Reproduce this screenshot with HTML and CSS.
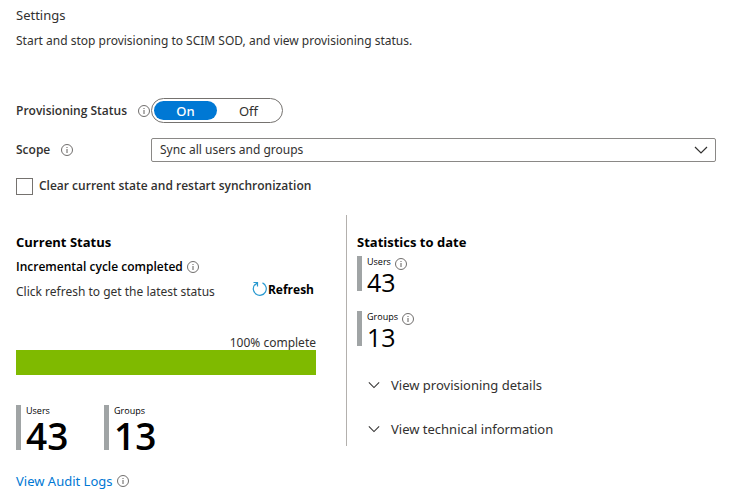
FILE: index.html
```html
<!DOCTYPE html>
<html lang="en">
<head>
<meta charset="utf-8">
<title>Provisioning settings</title>
<link rel="stylesheet" href="styles.css">
</head>
<body>
<svg class="defs" aria-hidden="true">
  <symbol id="info" viewBox="0 0 12 12"><circle cx="6" cy="6" r="5.5" fill="none" stroke="currentColor" stroke-width=".9"/><path d="M6 5v4M6 3v1" fill="none" stroke="currentColor"/></symbol>
  <symbol id="chevron" viewBox="0 0 14 8"><path d="M1 1l6 6 6-6" fill="none" stroke="currentColor" stroke-width="1.2"/></symbol>
</svg>
<main>
  <h1>Settings</h1>
  <p class="intro">Start and stop provisioning to SCIM SOD, and view provisioning status.</p>

  <form class="form">
    <div class="field" role="radiogroup" aria-labelledby="status-label">
      <span class="label label-wide"><span id="status-label">Provisioning Status</span><svg class="info"><use href="#info"/></svg></span>
      <div class="toggle">
        <label><input type="radio" name="status" checked><span>On</span></label>
        <label><input type="radio" name="status"><span>Off</span></label>
      </div>
    </div>
    <div class="field">
      <span class="label"><label for="scope">Scope</label><svg class="info"><use href="#info"/></svg></span>
      <div class="select">
        <select id="scope"><option>Sync all users and groups</option></select>
        <svg class="arrow"><use href="#chevron"/></svg>
      </div>
    </div>
    <label class="check"><input type="checkbox"><span>Clear current state and restart synchronization</span></label>
  </form>

  <div class="columns">
    <section class="current">
      <h2>Current Status</h2>
      <h3>Incremental cycle completed<svg class="info"><use href="#info"/></svg></h3>
      <div class="refresh-row">
        <span>Click refresh to get the latest status</span>
        <button type="button" class="refresh"><svg viewBox="0 0 16 16"><path d="M10.5 .9A6.5 6.5 0 1 1 3 2.4M1.5 .5H5.5V4.5M5.5 .5L3 3" fill="none" stroke="currentColor" stroke-width="1.2"/></svg>Refresh</button>
      </div>
      <p class="percent">100% complete</p>
      <div class="progress" role="progressbar" aria-label="Cycle progress" aria-valuenow="100" aria-valuemin="0" aria-valuemax="100"></div>
      <div class="stats">
        <div class="stat large"><div class="stat-name">Users</div><div class="stat-value">43</div></div>
        <div class="stat large"><div class="stat-name">Groups</div><div class="stat-value">13</div></div>
      </div>
    </section>
    <section class="totals">
      <h2>Statistics to date</h2>
      <div class="stat"><div class="stat-name">Users<svg class="info"><use href="#info"/></svg></div><div class="stat-value">43</div></div>
      <div class="stat"><div class="stat-name">Groups<svg class="info"><use href="#info"/></svg></div><div class="stat-value">13</div></div>
      <button type="button" class="expander"><svg><use href="#chevron"/></svg>View provisioning details</button>
      <button type="button" class="expander"><svg><use href="#chevron"/></svg>View technical information</button>
    </section>
  </div>
  <p class="logs"><a href="#logs">View Audit Logs</a><svg class="info"><use href="#info"/></svg></p>
</main>
</body>
</html>
```
FILE: styles.css
```css
* { box-sizing: border-box; }
body {
  margin: 0;
  background: #fff;
  color: #323130;
  font: 12px/20px "Noto Sans", "Open Sans", sans-serif;
}
main { padding: 5px 14px 8px 16px; }
h1, h2, h3, p { margin: 0; font-size: inherit; }
h1 { font-size: 13px; font-weight: 400; }
button, select { font: inherit; color: inherit; }
.defs { position: absolute; width: 0; height: 0; }
.info { width: 12px; height: 12px; flex: none; color: #605e5c; }
.intro { margin-top: 6px; }

.form { margin-top: 47px; }
.field { display: flex; align-items: center; }
.field + .field { margin-top: 15px; }
.label, .check, h2, h3, .refresh, .stat { font-family: "Open Sans", "Noto Sans", sans-serif; }
.label { display: flex; align-items: center; gap: 11px; width: 135px; flex: none; font-weight: 600; }
.label-wide { justify-content: space-between; gap: 0; padding-right: 1px; }
.toggle {
  display: flex;
  width: 132px;
  height: 25px;
  padding: 2px;
  border: 1px solid #75726f;
  border-radius: 13px;
}
.toggle label { flex: 1; position: relative; text-align: center; font-size: 13px; }
.toggle input { position: absolute; opacity: 0; margin: 0; }
.toggle span { display: block; height: 19px; border-radius: 10px; }
.toggle input:checked + span { background: #0078d4; color: #fff; font-weight: 500; }
.select { position: relative; flex: 1; }
select {
  display: block;
  appearance: none;
  width: 100%;
  height: 24px;
  padding: 0 30px 0 8px;
  border: 1px solid #8a8886;
  border-radius: 2px;
  background: #fff;
}
.arrow { position: absolute; right: 8px; top: 8px; width: 14px; height: 8px; pointer-events: none; }
.check { display: flex; align-items: center; gap: 6px; margin-top: 14px; font-weight: 600; }
.check input { appearance: none; width: 17px; height: 17px; margin: 0; border: 1px solid #75726f; background: #fff; }

.columns { display: grid; grid-template-columns: 330px 1fr; align-items: start; margin-top: 19px; color: #000; }
.current { padding: 17px 30px 0 0; }
h2 { font-size: 13px; font-weight: 700; }
h3 { display: flex; align-items: center; gap: 4px; margin-top: 5px; font-weight: 600; }
.refresh-row { display: flex; justify-content: space-between; align-items: flex-start; margin-top: 5px; color: #323130; }
.refresh { display: flex; align-items: center; height: 16px; padding: 0 2px 0 0; border: 0; background: none; color: #000; font-weight: 700; }
.refresh svg { width: 16px; height: 16px; color: #2899d0; }
.percent { margin-top: 34px; line-height: 14px; text-align: right; color: #323130; }
.progress { height: 25px; background: #7fba00; }
.stats { display: grid; grid-template-columns: 88px 88px; margin-top: 30px; }
.stat { height: 35px; padding-left: 5px; border-left: 5px solid #a0a4a5; }
.stat-name { display: flex; gap: 4px; height: 12px; font-size: 9px; line-height: 12px; }
.stat-name .info { position: relative; top: 2px; }
.stat-value { font-size: 25px; line-height: 28px; font-weight: 500; }
.stat.large { height: 45px; }
.large .stat-value { font-size: 37px; line-height: 38px; font-weight: 600; }

.totals { min-height: 231px; padding: 17px 0 7px 10px; border-left: 1px solid #b3b0ad; }
.totals .stat { margin-top: 4px; }
.totals .stat + .stat { margin-top: 20px; }
.expander { display: flex; align-items: center; gap: 11px; margin-top: 24px; padding: 0 0 0 11px; border: 0; background: none; color: #323130; font-size: 13px; }
.stat + .expander { margin-top: 29px; }
.expander svg { width: 12px; height: 8px; }
.logs { display: flex; align-items: center; gap: 4px; margin-top: 21px; font-size: 13px; }
a { color: #0078d4; text-decoration: none; }
```
